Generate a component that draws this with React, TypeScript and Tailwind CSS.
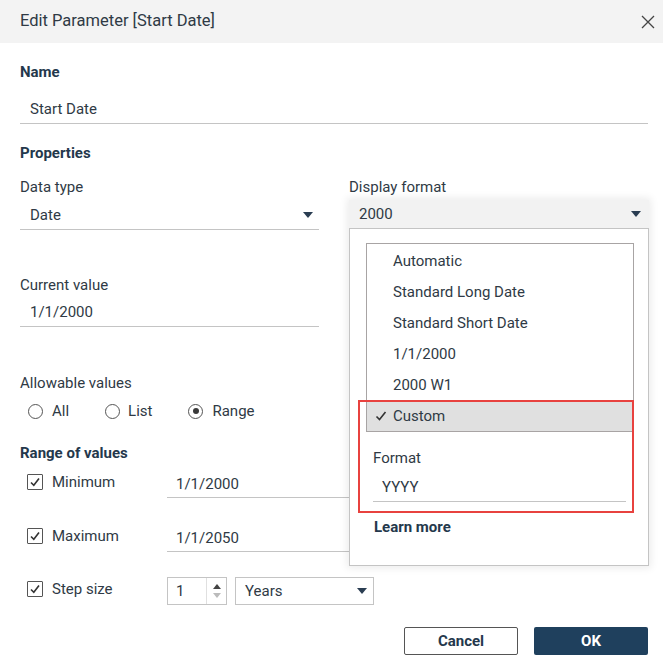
import React from "react";

const Arrow = () => (
  <svg width="10" height="6" viewBox="0 0 10 6" className="shrink-0">
    <path d="M0 0 L10 0 L5 6 Z" fill="#2a3d52" />
  </svg>
);

const Check = () => (
  <span className="w-[16px] h-[16px] border border-[#555] rounded-[1px] flex items-center justify-center bg-white shrink-0">
    <svg width="12" height="12" viewBox="0 0 12 12">
      <path d="M2 6.5 L4.8 9.3 L10 2.5" fill="none" stroke="#333" strokeWidth="1.6" />
    </svg>
  </span>
);

const Radio = ({ on }: { on?: boolean }) => (
  <span className="w-[15px] h-[15px] rounded-full border-[1.3px] border-[#555] flex items-center justify-center shrink-0">
    {on && <span className="w-[6px] h-[6px] rounded-full bg-[#3a3a3a]" />}
  </span>
);

export default function App() {
  const items = ["Automatic", "Standard Long Date", "Standard Short Date", "1/1/2000", "2000 W1"];
  return (
    <div className="w-[663px] h-[670px] bg-white relative overflow-hidden font-['Roboto',sans-serif] text-[15px] text-[#2f3a45]">
      <div className="h-[43px] bg-[#f3f3f3] flex items-center justify-between pl-[20px] pr-[8px]">
        <span className="text-[16.5px] text-[#2f3a45]">Edit Parameter [Start Date]</span>
        <svg width="14" height="14" viewBox="0 0 14 14">
          <path d="M1 1 L13 13 M13 1 L1 13" stroke="#444" strokeWidth="1.3" />
        </svg>
      </div>

      <div className="pl-[20px] pr-[15px] pt-[19px] flex flex-col">
        <div className="h-[20px] flex items-center font-bold text-[#24384c]">Name</div>
        <div className="mt-[13px] h-[29px] border-b border-[#c4c4c4] flex items-center pl-[10px] pt-[1px]">Start Date</div>

        <div className="mt-[19px] h-[20px] flex items-center font-bold text-[#24384c]">Properties</div>

        <div className="grid grid-cols-[299px_299px] gap-x-[30px]">
          <div className="flex flex-col">
            <div className="mt-[14px] h-[20px] flex items-center">Data type</div>
            <div className="mt-[4px] h-[29px] border-b border-[#c4c4c4] flex items-center justify-between pl-[10px] pr-[6px]">
              <span className="pt-[1px]">Date</span>
              <Arrow />
            </div>
          </div>
          <div className="flex flex-col">
            <div className="mt-[14px] h-[20px] flex items-center">Display format</div>
          </div>
        </div>

        <div className="w-[299px] flex flex-col">
          <div className="mt-[45px] h-[20px] flex items-center">Current value</div>
          <div className="mt-[3px] h-[29px] border-b border-[#c4c4c4] flex items-center pl-[10px] pt-[1px]">1/1/2000</div>
        </div>

        <div className="mt-[46px] h-[20px] flex items-center">Allowable values</div>
        <div className="mt-[8px] h-[20px] flex items-center pl-[8px]">
          <Radio />
          <span className="ml-[9px]">All</span>
          <span className="ml-[36px]"><Radio /></span>
          <span className="ml-[8px]">List</span>
          <span className="ml-[36px]"><Radio on /></span>
          <span className="ml-[9px]">Range</span>
        </div>

        <div className="mt-[22px] h-[20px] flex items-center font-bold text-[#24384c]">Range of values</div>

        <div className="mt-[6px] h-[29px] flex">
          <div className="w-[147px] flex items-center pl-[7px] pb-[3px]">
            <Check />
            <span className="ml-[9px]">Minimum</span>
          </div>
          <div className="flex-1 border-b border-[#c4c4c4] flex items-center pl-[9px] pt-[2px]">1/1/2000</div>
        </div>

        <div className="mt-[25px] h-[29px] flex">
          <div className="w-[147px] flex items-center pl-[7px] pb-[3px]">
            <Check />
            <span className="ml-[9px]">Maximum</span>
          </div>
          <div className="flex-1 border-b border-[#c4c4c4] flex items-center pl-[9px] pt-[2px]">1/1/2050</div>
        </div>

        <div className="mt-[25px] h-[28px] flex">
          <div className="w-[147px] flex items-center pl-[7px] pb-[4px]">
            <Check />
            <span className="ml-[9px]">Step size</span>
          </div>
          <div className="w-[60px] border border-[#c4c4c4] flex">
            <div className="flex-1 flex items-center pl-[8px]">1</div>
            <div className="w-[20px] border-l border-[#e0e0e0] flex flex-col items-center justify-center gap-[4px]">
              <svg width="8" height="5" viewBox="0 0 8 5"><path d="M0 5 L8 5 L4 0 Z" fill="#444" /></svg>
              <svg width="8" height="5" viewBox="0 0 8 5"><path d="M0 0 L8 0 L4 5 Z" fill="#bbb" /></svg>
            </div>
          </div>
          <div className="ml-[8px] w-[139px] border border-[#c4c4c4] flex items-center justify-between pl-[9px] pr-[6px]">
            <span>Years</span>
            <Arrow />
          </div>
        </div>

        <div className="mt-[22px] flex justify-end gap-[16px]">
          <button className="w-[114px] h-[28px] border border-[#555] rounded-[2px] bg-white font-bold text-[#24384c]">Cancel</button>
          <button className="w-[114px] h-[28px] rounded-[2px] bg-[#1f405d] font-bold text-white">OK</button>
        </div>
      </div>

      {/* Display format open dropdown */}
      <div className="absolute left-[349px] top-[200px] w-[300px] flex flex-col shadow-[0_0_8px_2px_rgba(0,0,0,0.08)]">
        <div className="h-[28px] bg-[#f2f2f2] flex items-center justify-between pl-[10px] pr-[8px]">
          <span className="pt-[1px]">2000</span>
          <Arrow />
        </div>
        <div className="h-[338px] border border-[#c4c4c4] bg-white flex flex-col pl-[16px] pt-[14px]">
          <div className="w-[268px] border border-[#a8a4a4] flex flex-col pt-[2px]">
            {items.map((t) => (
              <div key={t} className="h-[31px] flex items-center pl-[26px]">{t}</div>
            ))}
            <div className="h-[30px] bg-[#e0e0e0] flex items-center pl-[8px]">
              <svg width="12" height="12" viewBox="0 0 12 12">
                <path d="M1.5 6.5 L4.5 9.5 L10.5 2" fill="none" stroke="#333" strokeWidth="1.6" />
              </svg>
              <span className="ml-[6px]">Custom</span>
            </div>
          </div>
          <div className="mt-[16px] h-[20px] flex items-center pl-[7px]">Format</div>
          <div className="mt-[5px] ml-[7px] w-[253px] h-[29px] border-b border-[#c4c4c4] flex items-center pl-[9px] pt-[1px]">YYYY</div>
          <div className="mt-[15px] h-[20px] flex items-center pl-[8px] font-bold text-[#24384c]">Learn more</div>
        </div>
      </div>

      {/* annotation */}
      <div className="absolute left-[358px] top-[400px] w-[276px] h-[113px] border-2 border-[#e8423f]" />
    </div>
  );
}
